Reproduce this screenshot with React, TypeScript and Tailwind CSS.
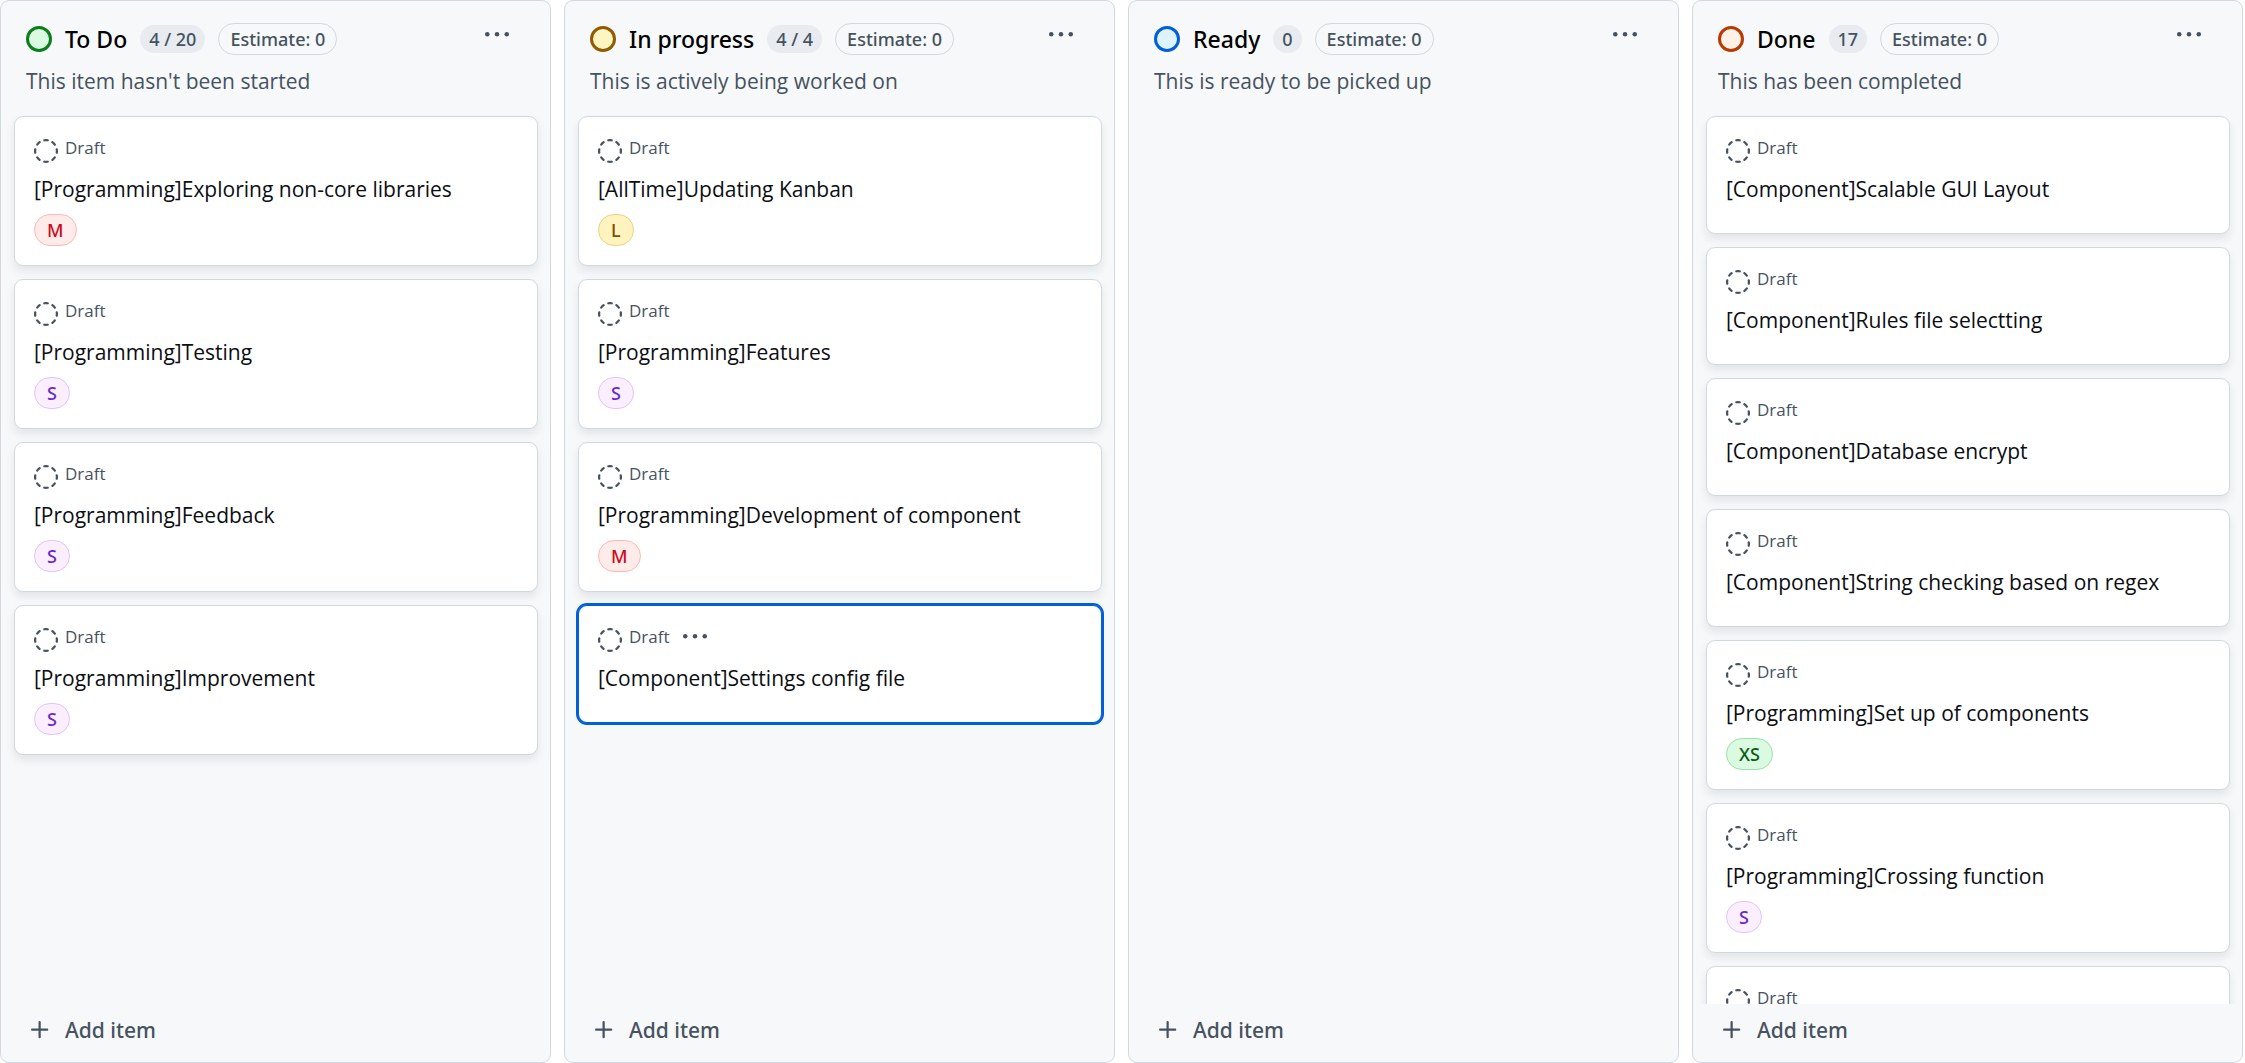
type Size = "XS" | "S" | "M" | "L";

interface Item {
  title?: string;
  size?: Size;
  focused?: boolean;
}

interface Column {
  name: string;
  count: string;
  description: string;
  dot: string;
  items: Item[];
}

const columns: Column[] = [
  {
    name: "To Do",
    count: "4 / 20",
    description: "This item hasn't been started",
    dot: "border-[#0a7e1a] bg-[#dafbe1]",
    items: [
      { title: "[Programming]Exploring non-core libraries", size: "M" },
      { title: "[Programming]Testing", size: "S" },
      { title: "[Programming]Feedback", size: "S" },
      { title: "[Programming]Improvement", size: "S" },
    ],
  },
  {
    name: "In progress",
    count: "4 / 4",
    description: "This is actively being worked on",
    dot: "border-[#935b00] bg-[#fff5c2]",
    items: [
      { title: "[AllTime]Updating Kanban", size: "L" },
      { title: "[Programming]Features", size: "S" },
      { title: "[Programming]Development of component", size: "M" },
      { title: "[Component]Settings config file", focused: true },
    ],
  },
  {
    name: "Ready",
    count: "0",
    description: "This is ready to be picked up",
    dot: "border-[#0060d9] bg-[#ddf4ff]",
    items: [],
  },
  {
    name: "Done",
    count: "17",
    description: "This has been completed",
    dot: "border-[#b93a00] bg-[#fff1e5]",
    items: [
      { title: "[Component]Scalable GUI Layout" },
      { title: "[Component]Rules file selectting" },
      { title: "[Component]Database encrypt" },
      { title: "[Component]String checking based on regex" },
      { title: "[Programming]Set up of components", size: "XS" },
      { title: "[Programming]Crossing function", size: "S" },
      {},
    ],
  },
];

const sizeStyles: Record<Size, string> = {
  XS: "border-[#9be3ab] bg-[#dafbe1] text-[#0a5c14]",
  S: "border-[#e0c5fc] bg-[#fbefff] text-[#6a29d0]",
  M: "border-[#ffb8b6] bg-[#ffebe9] text-[#cb0a1d]",
  L: "border-[#ecd57a] bg-[#fff4c0] text-[#7d4e00]",
};

function DraftIcon() {
  return (
    <svg className="h-6 w-6 shrink-0 self-end" viewBox="0 0 16 16" fill="currentColor" aria-hidden="true">
      <path d="M14.307 11.655a.75.75 0 0 1 .165 1.048 8.05 8.05 0 0 1-1.769 1.77.75.75 0 0 1-.883-1.214 6.552 6.552 0 0 0 1.44-1.439.75.75 0 0 1 1.047-.165Zm-2.652-9.962a.75.75 0 0 1 1.048-.165 8.05 8.05 0 0 1 1.77 1.769.75.75 0 0 1-1.214.883 6.552 6.552 0 0 0-1.439-1.44.75.75 0 0 1-.165-1.047ZM6.749.097a8.074 8.074 0 0 1 2.502 0 .75.75 0 1 1-.233 1.482 6.558 6.558 0 0 0-2.036 0A.751.751 0 0 1 6.749.097ZM.955 6.125a.75.75 0 0 1 .624.857 6.558 6.558 0 0 0 0 2.036.75.75 0 1 1-1.482.233 8.074 8.074 0 0 1 0-2.502.75.75 0 0 1 .858-.624Zm14.09 0a.75.75 0 0 1 .858.624c.13.829.13 1.673 0 2.502a.75.75 0 1 1-1.482-.233 6.558 6.558 0 0 0 0-2.036.75.75 0 0 1 .624-.857Zm-8.92 8.92a.75.75 0 0 1 .857-.624 6.558 6.558 0 0 0 2.036 0 .75.75 0 1 1 .233 1.482c-.829.13-1.673.13-2.502 0a.75.75 0 0 1-.624-.858Zm-4.432-3.39a.75.75 0 0 1 1.048.165 6.552 6.552 0 0 0 1.439 1.44.751.751 0 0 1-.883 1.212 8.05 8.05 0 0 1-1.77-1.769.75.75 0 0 1 .166-1.048Zm2.652-9.962A.75.75 0 0 1 4.18 2.74a6.556 6.556 0 0 0-1.44 1.44.751.751 0 0 1-1.212-.883 8.05 8.05 0 0 1 1.769-1.77.75.75 0 0 1 1.048.166Z" />
    </svg>
  );
}

function KebabIcon() {
  return (
    <svg className="h-6 w-6" viewBox="0 0 16 16" fill="currentColor" aria-hidden="true">
      <circle cx="1.5" cy="7.5" r="1.5" />
      <circle cx="8" cy="7.5" r="1.5" />
      <circle cx="14.5" cy="7.5" r="1.5" />
    </svg>
  );
}

function PlusIcon() {
  return (
    <svg className="h-6 w-6" viewBox="0 0 16 16" fill="currentColor" aria-hidden="true">
      <path d="M7.75 2a.75.75 0 0 1 .75.75V7h4.25a.75.75 0 0 1 0 1.5H8.5v4.25a.75.75 0 0 1-1.5 0V8.5H2.75a.75.75 0 0 1 0-1.5H7V2.75A.75.75 0 0 1 7.75 2Z" />
    </svg>
  );
}

function Card({ item }: { item: Item }) {
  return (
    <li
      className={`shrink-0 rounded-[9px] border bg-white p-[19px] ${
        item.focused ? "border-[#0060d9] ring-2 ring-[#0060d9]" : "border-[#d1d9e0] shadow-[0_5px_9px_rgba(37,41,46,0.09)]"
      }`}
    >
      <div className="flex h-[27px] items-start text-[#46525f]">
        <DraftIcon />
        <span className="ml-[7px] text-[17px] leading-6">Draft</span>
        {item.focused && (
          <button type="button" aria-label="Item actions" className="ml-[13px]">
            <KebabIcon />
          </button>
        )}
      </div>
      <h3 className="mt-[11px] min-h-[30px] text-[21px] leading-[30px] text-[#0b0e13]">{item.title}</h3>
      <div className="mt-[10px] flex">
        {item.size && (
          <span
            className={`flex h-8 items-center rounded-full border px-3 font-['Noto_Sans',sans-serif] text-[18px] font-medium ${sizeStyles[item.size]}`}
          >
            {item.size}
          </span>
        )}
      </div>
    </li>
  );
}

function BoardColumn({ column }: { column: Column }) {
  return (
    <section className="flex min-h-0 min-w-0 flex-col overflow-hidden rounded-[9px] border border-[#d1d9e0] bg-[#f6f8fa]">
      <header className="pt-[22px] pr-[41px] pl-[25px] text-[#46525f]">
        <div className="flex h-8 items-center gap-[13px] font-['Noto_Sans',sans-serif] text-[18px] font-medium">
          <span className={`h-[26px] w-[26px] shrink-0 rounded-full border-[3px] ${column.dot}`} />
          <h2 className="text-[23px] leading-8 text-black">{column.name}</h2>
          <span className="flex h-7 items-center rounded-full bg-[#e8ecf0] px-[9px]">{column.count}</span>
          <span className="flex h-8 items-center rounded-full border border-[#d1d9e0] px-[11px]">Estimate: 0</span>
          <button type="button" aria-label={`Actions for ${column.name}`} className="ml-auto self-start">
            <KebabIcon />
          </button>
        </div>
        <p className="mt-[11px] text-[21px] leading-[30px]">{column.description}</p>
      </header>
      <ul className="mt-[11px] flex min-h-0 flex-1 flex-col gap-[13px] overflow-y-auto pt-[9px] pr-3 pl-[13px] [scrollbar-width:none]">
        {column.items.map((item, i) => (
          <Card key={i} item={item} />
        ))}
      </ul>
      <button
        type="button"
        className="flex items-center gap-[13px] px-[27px] pt-[11px] pb-[17px] font-['Noto_Sans',sans-serif] text-[21px] leading-[30px] font-medium text-[#46525f]"
      >
        <PlusIcon />
        Add item
      </button>
    </section>
  );
}

export default function App() {
  return (
    <main className="grid h-screen grid-cols-4 grid-rows-1 gap-[13px] bg-white pr-0.5 font-['Open_Sans','Noto_Sans',sans-serif]">
      {columns.map((column) => (
        <BoardColumn key={column.name} column={column} />
      ))}
    </main>
  );
}
